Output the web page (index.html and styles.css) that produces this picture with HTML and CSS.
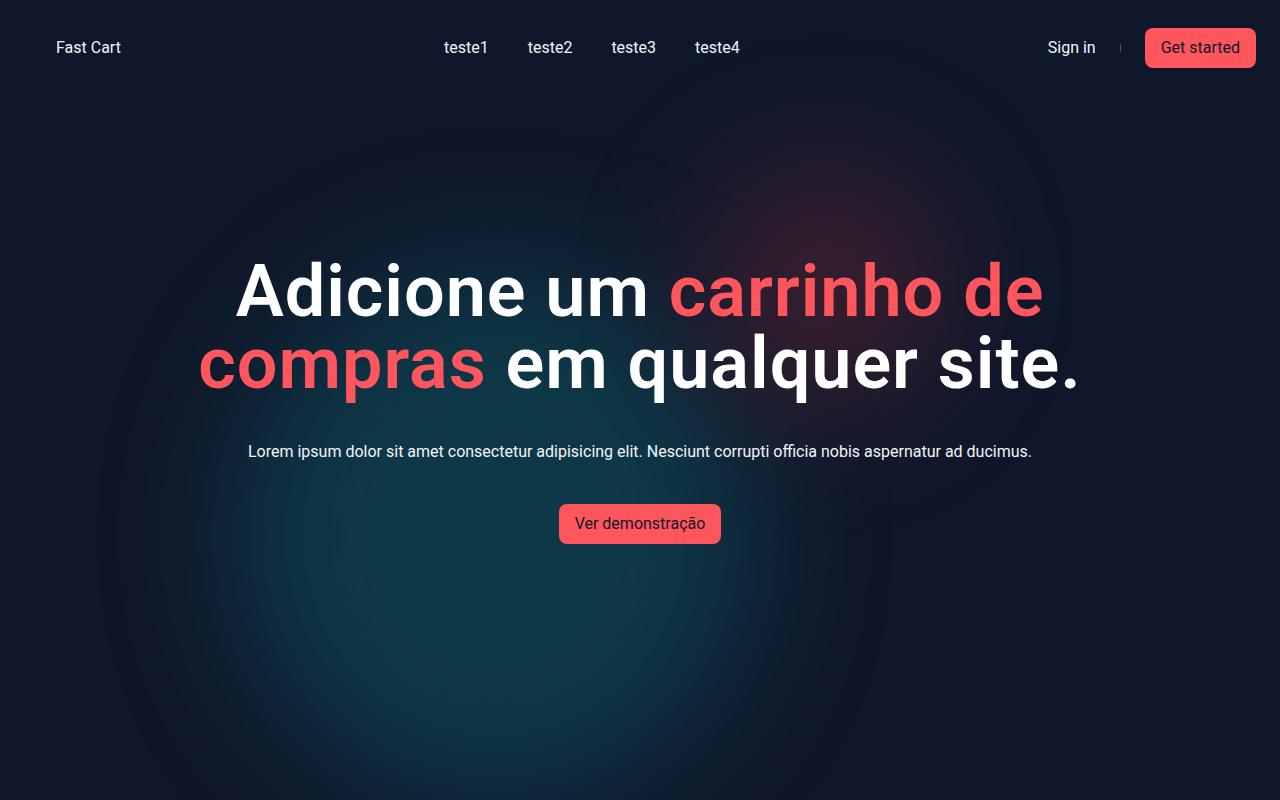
FILE: index.html
```html
<!DOCTYPE html>
<html lang="pt-BR">
<head>
<meta charset="utf-8">
<title>Fast Cart</title>
<link rel="stylesheet" href="styles.css">
</head>
<body>
<div class="page">
  <div class="glow glow-teal"></div>
  <div class="glow glow-red"></div>
  <header class="nav">
    <a class="brand" href="#">Fast Cart</a>
    <nav class="links">
      <a href="#">teste1</a>
      <a href="#">teste2</a>
      <a href="#">teste3</a>
      <a href="#">teste4</a>
    </nav>
    <div class="actions">
      <a class="signin" href="#">Sign in</a>
      <span class="divider"></span>
      <a class="btn" href="#">Get started</a>
    </div>
  </header>
  <main class="hero">
    <h1>Adicione um <span class="accent">carrinho de compras</span> em qualquer site.</h1>
    <p>Lorem ipsum dolor sit amet consectetur adipisicing elit. Nesciunt corrupti officia nobis aspernatur ad ducimus.</p>
    <a class="btn" href="#">Ver demonstração</a>
  </main>
</div>
</body>
</html>
```

FILE: styles.css
```css
* { box-sizing: border-box; }
html, body { margin: 0; padding: 0; }
body {
  background: #0f172a;
  font-family: Roboto, "Noto Sans", sans-serif;
  color: #f1f5f9;
}
a { text-decoration: none; color: inherit; }
.page {
  position: relative;
  width: 1280px;
  height: 800px;
  overflow: hidden;
  background: #0f172a;
}
.glow {
  position: absolute;
  border-radius: 50%;
  pointer-events: none;
}
.glow-teal {
  left: 235px;
  top: 265px;
  width: 520px;
  height: 540px;
  background: #0e3a4a;
  filter: blur(65px);
  opacity: 0.95;
}
.glow-red {
  left: 700px;
  top: 160px;
  width: 250px;
  height: 250px;
  background: #3b1f30;
  filter: blur(60px);
  opacity: 0.9;
}
.nav {
  position: relative;
  z-index: 1;
  display: flex;
  align-items: center;
  height: 95px;
  padding: 0 24px 0 56px;
  font-size: 16px;
}
.brand { color: #f1f5f9; flex: 0 0 388px; }
.links {
  display: flex;
  gap: 39px;
}
.actions {
  display: flex;
  align-items: center;
  margin-left: auto;
}
.signin { color: #f1f5f9; }
.divider {
  width: 1px;
  height: 8px;
  background: #475569;
  margin: 0 24px;
}
.btn {
  display: inline-block;
  background: #ff565e;
  color: #0f172a;
  border-radius: 8px;
  padding: 10px 16px;
  font-size: 16px;
  line-height: 20px;
}
.hero {
  position: relative;
  z-index: 1;
  display: flex;
  flex-direction: column;
  align-items: center;
  text-align: center;
  padding-top: 161px;
}
.hero h1 {
  margin: 0;
  width: 1000px;
  font-size: 72px;
  line-height: 72px;
  font-weight: 600;
  color: #ffffff;
  letter-spacing: 0.95px;
}
.accent { color: #ff565e; }
.hero p {
  margin: 40px 0 0;
  font-size: 16px;
  line-height: 24px;
  color: #f1f5f9;
}
.hero .btn { margin-top: 40px; }
```
